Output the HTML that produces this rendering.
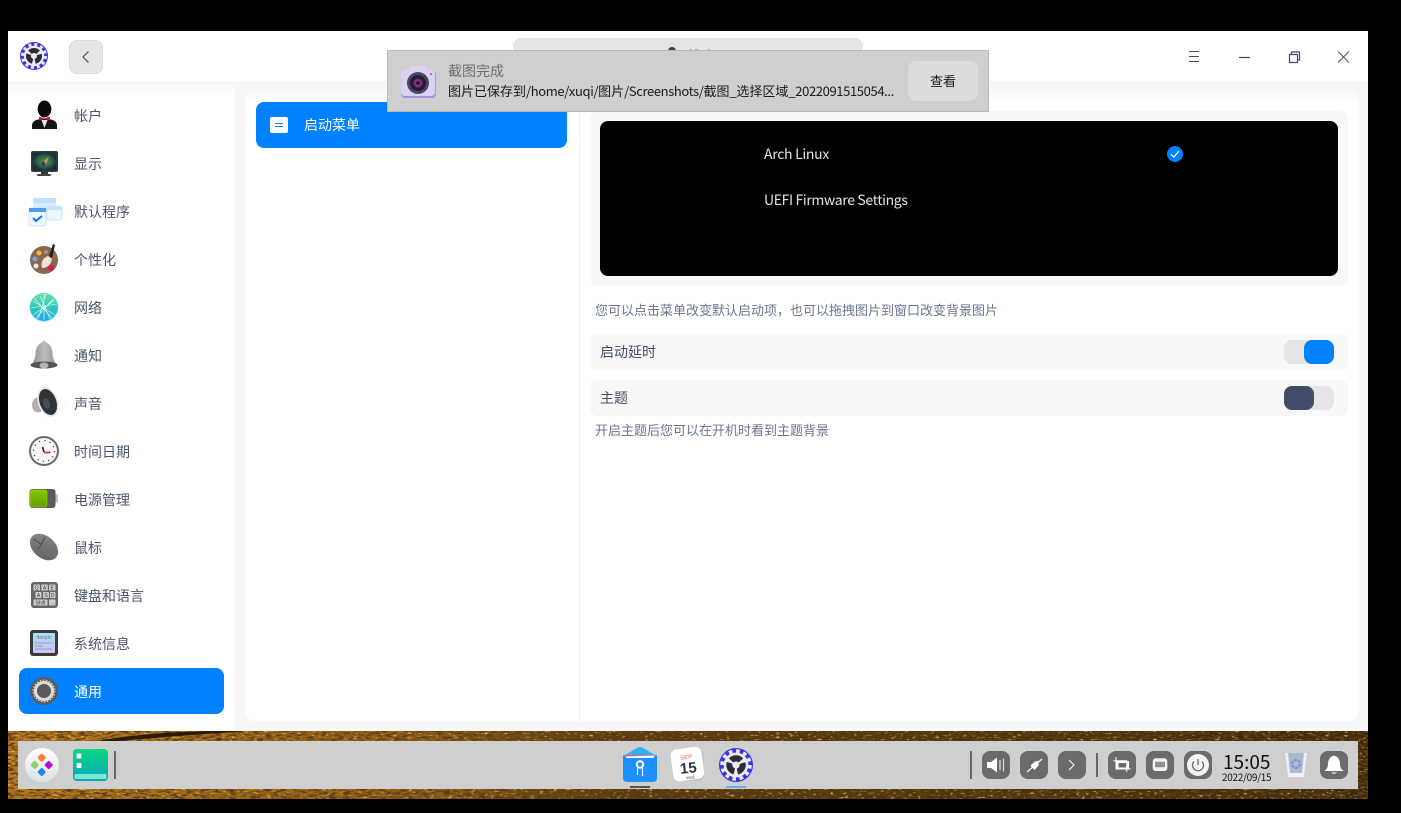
<!DOCTYPE html>
<html lang="zh"><head><meta charset="utf-8"><style>
*{box-sizing:border-box}
html,body{margin:0;padding:0;width:1401px;height:813px;background:#000;overflow:hidden;font-family:"Noto Sans CJK SC","Liberation Sans",sans-serif;font-size:14px}
.a{position:absolute}
.t{position:absolute;white-space:nowrap;line-height:20px;color:#4a556f}
.l{letter-spacing:-.38px}
svg{position:absolute;overflow:visible}
.tb{position:absolute;width:28px;height:28px;top:751px;border-radius:8px;background:#6b6b6b}
</style></head><body>
<!-- wallpaper -->
<svg style="left:8px;top:731px" width="1360" height="68" viewBox="0 0 1360 68">
<defs>
<filter id="n" x="0" y="0" width="100%" height="100%"><feTurbulence type="fractalNoise" baseFrequency="0.14 0.5" numOctaves="3" seed="7"/><feColorMatrix values="0 0 0 0 .1  0 0 0 0 .05  0 0 0 0 .01  5 0 0 0 -2.3"/></filter>
<filter id="g" x="0" y="0" width="100%" height="100%"><feTurbulence type="fractalNoise" baseFrequency="0.22 0.5" numOctaves="2" seed="21"/><feColorMatrix values="0 0 0 0 .8  0 0 0 0 .5  0 0 0 0 .12  0 4 0 0 -2.3"/></filter>
<linearGradient id="wg" x1="0" x2="1" y1="0" y2="0"><stop offset="0" stop-color="#b5761c"/><stop offset=".3" stop-color="#8f5c14"/><stop offset=".45" stop-color="#5c3a0c"/><stop offset=".8" stop-color="#4c300a"/><stop offset="1" stop-color="#3e2808"/></linearGradient></defs>
<rect width="1360" height="68" fill="url(#wg)"/><rect width="1360" height="68" filter="url(#g)"/><rect width="1360" height="68" filter="url(#n)"/>
<path d="M90 10Q130 2 200 0L240 0Q150 6 90 12Z" fill="#2a1a08"/>
</svg>
<!-- window -->
<div class="a" style="left:8px;top:31px;width:1360px;height:700px;background:#f8f8f8"></div>
<div class="a" style="left:8px;top:31px;width:1360px;height:50px;background:#fff"></div>
<div class="a" style="left:8px;top:81px;width:227px;height:650px;background:linear-gradient(#f8f8f8,#fff 16px)"></div>
<div class="a" style="left:245px;top:91px;width:1113px;height:630px;background:linear-gradient(#fafafa,#fff 12px);border-radius:8px"></div>
<div class="a" style="left:579px;top:91px;width:1px;height:630px;background:#f3f3f3"></div>

<!-- titlebar -->
<svg style="left:20px;top:42px" width="28" height="28" viewBox="0 0 28 28"><circle cx="14" cy="14" r="14" fill="#3c33e8"/><circle cx="14" cy="14" r="11.500" fill="none" stroke="#ecebf4" stroke-width="3" stroke-dasharray="3 3.020"/><circle cx="14" cy="14" r="10.200" fill="#ecebf4"/><circle cx="14" cy="14" r="5.500" fill="none" stroke="#2c2c34" stroke-width="5" stroke-dasharray="9 2.520" transform="rotate(-136.900 14 14)"/><circle cx="14" cy="14" r="2.300" fill="#ecebf4"/></svg>
<div class="a" style="left:69px;top:40px;width:34px;height:34px;border-radius:8px;background:#e6e6e6;border:1px solid #dcdcdc"></div>
<svg style="left:69px;top:40px" width="34" height="34"><path d="M19.500 11.500L14 17l5.500 5.500" fill="none" stroke="#414d68" stroke-width="1.200"/></svg>
<div class="a" style="left:513px;top:38px;width:350px;height:36px;border-radius:8px;background:#e5e5e5"></div>
<div class="a" style="left:668px;top:47px;width:8px;height:6px;border-radius:4px 4px 0 0;background:#444"></div>
<div class="t" style="left:688px;top:46px;color:#777">搜索</div>
<svg style="left:1185px;top:49px" width="170" height="20">
<path d="M4 2.500H14M4 7.500H14M4 12.500H14" stroke="#414d68" stroke-width="1" fill="none"/>
<path d="M54 8.500H65" stroke="#414d68" stroke-width="1.200"/>
<path d="M104.500 5.500H112.500V13.500H104.500ZM106.500 5V3H114.500V11H113" fill="none" stroke="#414d68" stroke-width="1.200"/>
<path d="M153 2.500L164 13.500M164 2.500L153 13.500" stroke="#414d68" stroke-width=".9"/>
</svg>

<!-- sidebar -->
<div class="a" style="left:19px;top:668px;width:205px;height:46px;border-radius:8px;background:#0081ff"></div>
<div class="t" style="left:74px;top:106px">帐户</div>
<div class="t" style="left:74px;top:154px">显示</div>
<div class="t" style="left:74px;top:202px">默认程序</div>
<div class="t" style="left:74px;top:250px">个性化</div>
<div class="t" style="left:74px;top:298px">网络</div>
<div class="t" style="left:74px;top:346px">通知</div>
<div class="t" style="left:74px;top:394px">声音</div>
<div class="t" style="left:74px;top:442px">时间日期</div>
<div class="t" style="left:74px;top:490px">电源管理</div>
<div class="t" style="left:74px;top:538px">鼠标</div>
<div class="t" style="left:74px;top:586px">键盘和语言</div>
<div class="t" style="left:74px;top:634px">系统信息</div>
<div class="t" style="left:74px;top:682px;color:#fff">通用</div>

<!-- sidebar icons -->
<svg style="left:28px;top:99px" width="32" height="32" viewBox="0 0 32 32"><path d="M4 30V26Q4 22 10 20.500L16 19.500 23 20.500Q29 22 29 26V30Z" fill="#141414"/><ellipse cx="16.500" cy="10" rx="6.800" ry="8.500" fill="#0a0a0a"/><path d="M13.500 21L16.500 29 19.500 21Z" fill="#e8e8e8"/><path d="M11 17.500L16.500 19.500 22 17.500V21.500L16.500 20 11 21.500Z" fill="#d01060"/></svg>
<svg style="left:28px;top:147px" width="32" height="32" viewBox="0 0 32 32"><defs><radialGradient id="sc"><stop offset="0" stop-color="#6d8a30"/><stop offset=".55" stop-color="#2f6a50"/><stop offset="1" stop-color="#16303a"/></radialGradient></defs><rect x="3" y="4" width="27" height="21" rx="2" fill="#3a3a3a"/><rect x="4.500" y="5.500" width="24" height="18" fill="url(#sc)"/><path d="M15 16L21 9 18 18Z" fill="#a9b048"/><circle cx="15.500" cy="17" r="2" fill="#4a2a80"/><rect x="13" y="25" width="7" height="2" fill="#333"/><rect x="9" y="27" width="14" height="2" rx="1" fill="#444"/></svg>
<svg style="left:28px;top:195px" width="34" height="34" viewBox="0 0 34 34"><rect x="5" y="3" width="23" height="18" rx="2" fill="#d8ebff"/><rect x="5" y="3" width="23" height="5" rx="2" fill="#c0deff"/><rect x="19" y="11" width="15" height="14" rx="2" fill="#edf6ff" stroke="#cfe6ff"/><rect x="19" y="11" width="15" height="4" fill="#c6e2ff"/><rect x="1" y="13" width="17" height="18" rx="2" fill="#eef6ff" stroke="#c8e4ff"/><rect x="1" y="13" width="17" height="4" fill="#4b9cf0"/><path d="M5 23l3 3 6-5" fill="none" stroke="#0a78e8" stroke-width="2"/></svg>
<svg style="left:28px;top:243px" width="32" height="32" viewBox="0 0 32 32"><circle cx="16" cy="17" r="14" fill="#8a6550"/><circle cx="11" cy="10" r="2.500" fill="#f5b942"/><circle cx="18" cy="9" r="2" fill="#b09080"/><circle cx="7" cy="16" r="2.500" fill="#6ca4e8"/><circle cx="8" cy="23" r="2.500" fill="#f0e6da"/><circle cx="23" cy="25" r="3" fill="#d81c48"/><path d="M14 25Q12 16 20 13L24 16Q22 25 14 25Z" fill="#eee5d8"/><path d="M21 13L25 1 27 2 24 15Z" fill="#222"/></svg>
<svg style="left:28px;top:291px" width="32" height="32" viewBox="0 0 32 32"><defs><linearGradient id="ng" x1="0" y1="0" x2="0" y2="1"><stop offset="0" stop-color="#6ae2a4"/><stop offset=".5" stop-color="#30c8bc"/><stop offset="1" stop-color="#25a4f2"/></linearGradient></defs><circle cx="16" cy="16.500" r="14.500" fill="#a8f0ff"/><circle cx="16" cy="16" r="14" fill="url(#ng)"/><path d="M16 3V29M5 10L27 24M27 9L5 24M10 28L18 3M22 28L12 5M3 17L29 13M6 7L24 27M26 7L8 27" stroke="#eafff8" stroke-width=".6" fill="none"/></svg>
<svg style="left:28px;top:339px" width="32" height="32" viewBox="0 0 32 32"><defs><linearGradient id="bl" x1="0" x2="1"><stop offset="0" stop-color="#8a8a8a"/><stop offset=".5" stop-color="#bdbdbd"/><stop offset="1" stop-color="#929292"/></linearGradient></defs><path d="M16 1.500Q15 2 14.500 3Q8 6 7.500 14Q7.500 21 3 26H29Q24.500 21 24.500 14Q24 6 17.500 3Q17 2 16 1.500Z" fill="url(#bl)"/><ellipse cx="16" cy="26" rx="13.500" ry="3.500" fill="#555"/><ellipse cx="16" cy="26.500" rx="4.500" ry="3" fill="#b5b5b5"/></svg>
<svg style="left:28px;top:387px" width="32" height="32" viewBox="0 0 32 32"><ellipse cx="10" cy="18" rx="6" ry="7.500" fill="#b0b0b0"/><ellipse cx="20" cy="15" rx="10" ry="15.500" transform="rotate(-20 20 15)" fill="#eaeaea"/><ellipse cx="20" cy="15" rx="8.300" ry="13.500" transform="rotate(-20 20 15)" fill="#2f343a"/><ellipse cx="18.500" cy="16.500" rx="3" ry="5.500" transform="rotate(-20 18.500 16.500)" fill="#4a4f56"/></svg>
<svg style="left:28px;top:435px" width="32" height="32" viewBox="0 0 32 32"><circle cx="16" cy="16" r="15" fill="#6a6a6a"/><circle cx="16" cy="16" r="13" fill="#f7f7f7"/><circle cx="16" cy="16" r="10.500" fill="none" stroke="#444" stroke-width="1.300" stroke-dasharray="1.200 4.300"/><path d="M14.500 12L16 17" stroke="#222" stroke-width="1.600"/><path d="M16 17.500H22.500" stroke="#e02040" stroke-width="1.600"/></svg>
<svg style="left:28px;top:483px" width="32" height="32" viewBox="0 0 32 32"><defs><linearGradient id="bt" x1="0" y1="0" x2="0" y2="1"><stop offset="0" stop-color="#8ac800"/><stop offset="1" stop-color="#5da000"/></linearGradient></defs><rect x="1.500" y="6" width="26" height="19" rx="3" fill="#5a5a5a"/><rect x="2.500" y="7" width="16.500" height="17" rx="2" fill="url(#bt)" stroke="#a6e000" stroke-width=".6"/><rect x="27.500" y="11.500" width="2.500" height="8" fill="#c0c0c0"/></svg>
<svg style="left:28px;top:531px" width="32" height="32" viewBox="0 0 32 32"><defs><linearGradient id="ms" x1="0" y1="0" x2="1" y2="1"><stop offset="0" stop-color="#8a8a8a"/><stop offset="1" stop-color="#5f5f5f"/></linearGradient></defs><ellipse cx="16" cy="16" rx="16" ry="11" transform="rotate(40 16 16)" fill="url(#ms)"/><path d="M5.500 8L13.500 13.500 9.500 18.500M13.500 13.500L17 6" stroke="#4a4a4a" fill="none"/></svg>
<svg style="left:28px;top:579px" width="32" height="32" viewBox="0 0 32 32"><rect x="3" y="3" width="27" height="26" rx="3" fill="#666"/><g fill="#cfcfcf"><rect x="5.500" y="5.500" width="6.500" height="6" rx=".8"/><rect x="13.300" y="5.500" width="6.500" height="6" rx=".8"/><rect x="21" y="5.500" width="6.500" height="6" rx=".8"/><rect x="7.500" y="13" width="6" height="6" rx=".8"/><rect x="15" y="13" width="6" height="6" rx=".8"/><rect x="22" y="13" width="5.500" height="6" rx=".8"/><rect x="5.500" y="20.500" width="14" height="6" rx=".8"/><rect x="21" y="20.500" width="6.500" height="6" rx=".8"/></g><g fill="#333" font-size="5" font-family="Liberation Sans" text-anchor="middle"><text x="8.700" y="10.500">Q</text><text x="16.500" y="10.500">A</text><text x="24.200" y="10.500">E</text><text x="10.500" y="18">A</text><text x="18" y="18">S</text><text x="24.700" y="18">D</text><text x="12.500" y="25.500">Shift</text><text x="24.200" y="25.500">→</text></g></svg>
<svg style="left:28px;top:627px" width="32" height="32" viewBox="0 0 32 32"><defs><linearGradient id="sg" x1="0" y1="0" x2="0" y2="1"><stop offset="0" stop-color="#a8e0f0"/><stop offset="1" stop-color="#cdc2f2"/></linearGradient></defs><rect x="2" y="3" width="28" height="26" rx="3" fill="#3a3a3a"/><rect x="5" y="6" width="22" height="20" rx="1" fill="url(#sg)"/><text x="16" y="12" font-size="5" fill="#6a7a9a" text-anchor="middle" font-family="Liberation Sans">deepin</text><path d="M7 16H24M7 19H15M7 22H24" stroke="#8090c0" stroke-width=".7"/></svg>
<svg style="left:28px;top:675px" width="32" height="32" viewBox="0 0 32 32"><circle cx="16" cy="16" r="14" fill="#5a5a5a"/><circle cx="16" cy="16" r="8.500" fill="none" stroke="#ddd" stroke-width="3"/><circle cx="16" cy="16" r="10.500" fill="none" stroke="#ccc" stroke-width="2" stroke-dasharray="1.500 1.500"/></svg>

<!-- middle list -->
<div class="a" style="left:256px;top:102px;width:311px;height:46px;border-radius:8px;background:#0081ff"></div>
<div class="a" style="left:270px;top:117px;width:18px;height:16px;border-radius:2px;background:#fff"></div>
<svg style="left:270px;top:117px" width="18" height="16"><path d="M5 6.500H13M5 9.500H13" stroke="#0081ff"/></svg>
<div class="t" style="left:304px;top:115px;color:#fff">启动菜单</div>

<!-- right content -->
<div class="a" style="left:590px;top:111px;width:758px;height:175px;border-radius:8px;background:#f8f8f8"></div>
<div class="a" style="left:600px;top:121px;width:738px;height:155px;border-radius:8px;background:#000"></div>
<div class="t" style="left:764px;top:144px;color:#e2e2e2;letter-spacing:-.3px">Arch Linux</div>
<div class="t" style="left:764px;top:190px;color:#e2e2e2;letter-spacing:-.36px">UEFI Firmware Settings</div>
<svg style="left:1167px;top:146px" width="16" height="16"><circle cx="8" cy="8" r="8" fill="#0081ff"/><path d="M4 8.500L6.800 11 12 5.200" fill="none" stroke="#fff" stroke-width="1.200"/></svg>
<div class="t" style="left:595px;top:300px;color:#6a768f;font-size:13px">您可以点击菜单改变默认启动项<span style="font-family:'Noto Sans CJK TC',sans-serif">，</span>也可以拖拽图片到窗口改变背景图片</div>
<div class="a" style="left:590px;top:334px;width:758px;height:36px;border-radius:8px;background:#f8f8f8"></div>
<div class="t" style="left:600px;top:342px;color:#414d68">启动延时</div>
<div class="a" style="left:1284px;top:340px;width:50px;height:24px;border-radius:8px;background:#e5e5e5"></div>
<div class="a" style="left:1304px;top:340px;width:30px;height:24px;border-radius:8px;background:#0081ff"></div>
<div class="a" style="left:590px;top:380px;width:758px;height:36px;border-radius:8px;background:#f8f8f8"></div>
<div class="t" style="left:600px;top:388px;color:#414d68">主题</div>
<div class="a" style="left:1284px;top:386px;width:50px;height:24px;border-radius:8px;background:#e5e5e5"></div>
<div class="a" style="left:1284px;top:386px;width:30px;height:24px;border-radius:8px;background:#414d68"></div>
<div class="t" style="left:595px;top:420px;color:#6a768f;font-size:13px">开启主题后您可以在开机时看到主题背景</div>

<!-- notification -->
<div class="a" style="left:387px;top:50px;width:602px;height:62px;background:#cfcfcf;border:1px solid #b9b9b9"></div>
<svg style="left:400px;top:65px" width="36" height="34" viewBox="0 0 36 34"><rect x="1" y="6" width="35" height="27" rx="4" fill="#a68fe0"/><rect x="1" y="5" width="34" height="26" rx="4" fill="#dcd0f4"/><path d="M8 6Q9 1 13 1H23Q27 1 28 6Z" fill="#dcd0f4"/><circle cx="18" cy="18" r="11" fill="#4a4560"/><circle cx="18" cy="18" r="8" fill="#241e32"/><circle cx="18" cy="18" r="4.500" fill="#8a2a80"/><circle cx="18" cy="18" r="1.800" fill="#1a1020"/><circle cx="31" cy="9" r="1" fill="#e04040"/></svg>
<div class="t" style="left:448px;top:61px;color:#6e6e6e">截图完成</div>
<div class="t" style="left:448px;top:81px;color:#1a1a1a;font-size:13px">图片已保存到<span class="l">/home/xuqi/</span>图片<span class="l">/Screenshots/</span>截图<span class="l">_</span>选择区域<span class="l">_2022091515054...</span></div>
<div class="a" style="left:908px;top:61px;width:70px;height:40px;border-radius:8px;background:#dcdcdc"></div>
<div class="t" style="left:930px;top:71px;color:#1c1c1c;font-size:13px">查看</div>

<!-- dock -->
<div class="a" style="left:18px;top:741px;width:1340px;height:48px;background:#cfcfcf"></div>
<svg style="left:25px;top:748px" width="34" height="34" viewBox="0 0 34 34"><defs><linearGradient id="lg" x1="0" y1="0" x2="0" y2="1"><stop offset="0" stop-color="#fff"/><stop offset="1" stop-color="#d9e3e6"/></linearGradient></defs><circle cx="17" cy="17" r="17" fill="url(#lg)"/><rect x="13.450" y="6.450" width="6.500" height="6.500" rx="1.500" transform="rotate(45 16.700 9.700)" fill="#ff7a3c"/><rect x="20.450" y="13.750" width="6.500" height="6.500" rx="1.500" transform="rotate(45 23.700 17)" fill="#b30fd8"/><rect x="6.450" y="13.750" width="6.500" height="6.500" rx="1.500" transform="rotate(45 9.700 17)" fill="#8fd070"/><rect x="13.450" y="20.750" width="6.500" height="6.500" rx="1.500" transform="rotate(45 16.700 24)" fill="#2d82f0"/></svg>
<svg style="left:73px;top:749px" width="35" height="32" viewBox="0 0 35 32"><defs><linearGradient id="tg" x1="0" y1="0" x2="0" y2="1"><stop offset="0" stop-color="#08d67e"/><stop offset="1" stop-color="#0aa8bf"/></linearGradient></defs><rect width="35" height="32" rx="4" fill="url(#tg)"/><rect x="1.500" y="25" width="32" height="5" rx="1.500" fill="#7de6d4"/><rect x="3.500" y="4.500" width="5" height="5" rx="1" fill="#fff"/><rect x="3.500" y="14" width="5" height="5" rx="1" fill="#fff"/></svg>
<div class="a" style="left:114px;top:751px;width:2px;height:28px;background:#666"></div>

<svg style="left:623px;top:747px" width="34" height="35" viewBox="0 0 34 35"><path d="M0 9L15 .5Q17 -.3 19 .5L34 9V15H0Z" fill="#30b0f5"/><path d="M3 8H31V12H3Z" fill="#ef5a70"/><path d="M3 9.500L31 8.500V13H3Z" fill="#fff"/><path d="M0 8L4 11H30L34 8V31Q34 35 30 35H4Q0 35 0 31Z" fill="#1f90ff"/><circle cx="17" cy="17.500" r="3.200" fill="none" stroke="#fff" stroke-width="2"/><path d="M14.500 19V28M19.500 19V29" stroke="#fff" stroke-width="1.100"/></svg>
<svg style="left:670px;top:747px" width="36" height="36" viewBox="0 0 36 36"><rect x="3" y="2" width="31" height="32" rx="6" fill="#c4c4c4"/><rect x="2" y="1" width="31" height="32" rx="6" transform="rotate(-8 18 18)" fill="#fff"/><text x="17" y="12" text-anchor="middle" font-size="6" fill="#ef6060" transform="rotate(-6 18 18)" font-family="Liberation Sans">SEP</text><text x="18" y="26" text-anchor="middle" font-size="15" font-weight="700" fill="#2a3444" transform="rotate(-6 18 18)" font-family="Liberation Sans">15</text><text x="19" y="32" text-anchor="middle" font-size="4" fill="#444" transform="rotate(-6 18 18)" font-family="Liberation Sans">Wed</text></svg>
<svg style="left:719px;top:748px" width="34" height="34" viewBox="0 0 28 28"><circle cx="14" cy="14" r="14" fill="#3c33e8"/><circle cx="14" cy="14" r="11.500" fill="none" stroke="#ecebf4" stroke-width="3" stroke-dasharray="3 3.020"/><circle cx="14" cy="14" r="10.200" fill="#ecebf4"/><circle cx="14" cy="14" r="5.500" fill="none" stroke="#2c2c34" stroke-width="5" stroke-dasharray="9 2.520" transform="rotate(-136.900 14 14)"/><circle cx="14" cy="14" r="2.300" fill="#ecebf4"/></svg>
<div class="a" style="left:630px;top:786px;width:20px;height:2px;background:#555"></div>
<div class="a" style="left:726px;top:786px;width:20px;height:2px;background:#5ab4ee"></div>

<div class="a" style="left:970px;top:751px;width:2px;height:28px;background:#666"></div>
<div class="a" style="left:1096px;top:753px;width:2px;height:24px;background:#666"></div>
<div class="tb" style="left:982px"></div>
<div class="tb" style="left:1020px"></div>
<div class="tb" style="left:1058px"></div>
<div class="tb" style="left:1108px"></div>
<div class="tb" style="left:1146px"></div>
<div class="tb" style="left:1184px"></div>
<div class="tb" style="left:1320px"></div>
<svg style="left:982px;top:751px" width="370" height="28">
<path d="M5 11H9L15 6.500V21.500L9 17H5Z" fill="#fff"/><path d="M18 9V19M21.500 7.500V20.500" stroke="#ddd" stroke-width="1.200"/>
<path d="M45 21L60 8" stroke="#fff" stroke-width="1.200"/><path d="M48.500 14.500L53 10.500 57 10 56.500 14.500 52.500 19Z" fill="#fff"/>
<path d="M87 9L92 14 87 19" fill="none" stroke="#fff"/>
<path d="M134 6V18H148.700M131.300 9.700H144.700V21" fill="none" stroke="#fff" stroke-width="1"/><rect x="135.500" y="11" width="10.500" height="6.500" fill="none" stroke="#fff" stroke-width="2"/>
<rect x="170.700" y="7.300" width="14.600" height="12.700" rx="3" fill="#f4f4f4"/><rect x="173" y="10.700" width="10" height="5.500" fill="#8a8a8a"/><path d="M173 12H183M173 14H183" stroke="#bbb" stroke-width=".6" stroke-dasharray="1 1"/>
<circle cx="216" cy="14" r="11" fill="#f4f4f4"/><path d="M212 10.500A5.500 5.500 0 1 0 220 10.500M216 8V14" fill="none" stroke="#6b6b6b" stroke-width="1.300"/>
<path d="M352 4.500Q346 6 346 13Q346 18 342 20H362Q358 18 358 13Q358 6 352 4.500Z" fill="#fff"/><path d="M349 21.500H355Q352 24 349 21.500Z" fill="#fff"/>
</svg>
<div class="t" style="left:1223px;top:751px;font-size:19px;line-height:22px;color:#111">15:05</div>
<div class="t" style="left:1222px;top:771px;font-size:10px;line-height:12px;color:#111;letter-spacing:-.3px">2022/09/15</div>
<svg style="left:1285px;top:753px" width="22" height="24" viewBox="0 0 22 24"><path d="M0 0H22L19 22Q19 24 17 24H5Q3 24 3 22Z" fill="#eef0f4"/><path d="M3 0H19L17 20H5Z" fill="#a9b8d4"/><circle cx="11" cy="11" r="4" fill="none" stroke="#7088c0" stroke-width="1.600" stroke-dasharray="3 1.200"/></svg>
</body></html>
